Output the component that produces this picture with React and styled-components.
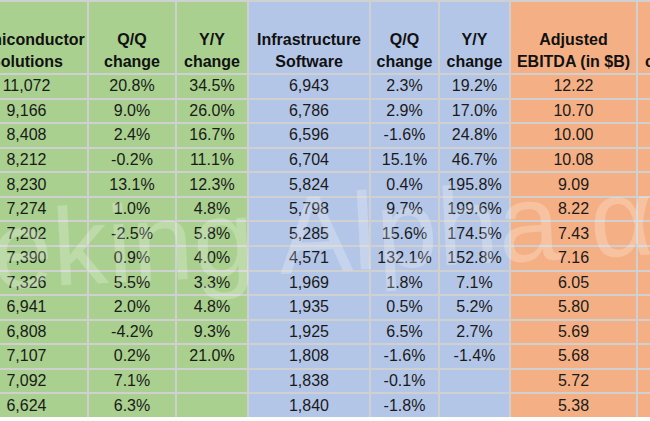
import React from 'react';
import styled, { createGlobalStyle } from 'styled-components';

const GlobalStyle = createGlobalStyle`
  html, body {
    margin: 0;
    padding: 0;
    background: #ffffff;
    overflow: hidden;
  }
  body {
    font-family: "Liberation Sans", Arial, sans-serif;
  }
`;

const tones = {
  green: '#a9d08e',
  blue: '#b4c6e7',
  orange: '#f4b084',
};

const Page = styled.div`
  position: relative;
  width: 650px;
  height: 421px;
  overflow: hidden;
`;

const Sheet = styled.div`
  display: grid;
  grid-template-columns: 121px 86px 70px 120px 67px 69px 125px 70px;
  grid-template-rows: 71px repeat(14, 22.57px);
  gap: 2px;
  padding-top: 2px;
  margin-left: -34px;
  width: max-content;
  background: #d0d0d0;
`;

const HeaderCell = styled.div`
  display: flex;
  align-items: flex-end;
  justify-content: center;
  padding: 0 2px 1px;
  background: ${(p) => tones[p.$tone]};
  color: #111111;
  font-size: 16px;
  font-weight: 700;
  line-height: 21.5px;
  text-align: center;
  white-space: nowrap;
`;

const Cell = styled.div`
  display: flex;
  align-items: center;
  justify-content: center;
  background: ${(p) => tones[p.$tone]};
  color: #1a1a1a;
  font-size: 16px;
  line-height: 18px;
  white-space: nowrap;
`;

const Watermark = styled.div`
  position: absolute;
  left: -140px;
  top: 198px;
  font-family: "Liberation Sans", Arial, sans-serif;
  font-size: 110px;
  line-height: 120px;
  color: rgba(255, 255, 255, 0.23);
  white-space: nowrap;
  transform: rotate(-3deg);
  transform-origin: left bottom;
  pointer-events: none;
`;

const columns = [
  { tone: 'green', title: ['Semiconductor', 'Solutions'] },
  { tone: 'green', title: ['Q/Q', 'change'] },
  { tone: 'green', title: ['Y/Y', 'change'] },
  { tone: 'blue', title: ['Infrastructure', 'Software'] },
  { tone: 'blue', title: ['Q/Q', 'change'] },
  { tone: 'blue', title: ['Y/Y', 'change'] },
  { tone: 'orange', title: ['Adjusted', 'EBITDA (in $B)'] },
  { tone: 'orange', title: ['Q/Q', 'change'] },
];

const rows = [
  ['11,072', '20.8%', '34.5%', '6,943', '2.3%', '19.2%', '12.22', ''],
  ['9,166', '9.0%', '26.0%', '6,786', '2.9%', '17.0%', '10.70', ''],
  ['8,408', '2.4%', '16.7%', '6,596', '-1.6%', '24.8%', '10.00', ''],
  ['8,212', '-0.2%', '11.1%', '6,704', '15.1%', '46.7%', '10.08', ''],
  ['8,230', '13.1%', '12.3%', '5,824', '0.4%', '195.8%', '9.09', ''],
  ['7,274', '1.0%', '4.8%', '5,798', '9.7%', '199.6%', '8.22', ''],
  ['7,202', '-2.5%', '5.8%', '5,285', '15.6%', '174.5%', '7.43', ''],
  ['7,390', '0.9%', '4.0%', '4,571', '132.1%', '152.8%', '7.16', ''],
  ['7,326', '5.5%', '3.3%', '1,969', '1.8%', '7.1%', '6.05', ''],
  ['6,941', '2.0%', '4.8%', '1,935', '0.5%', '5.2%', '5.80', ''],
  ['6,808', '-4.2%', '9.3%', '1,925', '6.5%', '2.7%', '5.69', ''],
  ['7,107', '0.2%', '21.0%', '1,808', '-1.6%', '-1.4%', '5.68', ''],
  ['7,092', '7.1%', '', '1,838', '-0.1%', '', '5.72', ''],
  ['6,624', '6.3%', '', '1,840', '-1.8%', '', '5.38', ''],
];

export default function App() {
  return (
    <Page>
      <GlobalStyle />
      <Sheet>
        {columns.map((col, i) => (
          <HeaderCell key={`h${i}`} $tone={col.tone}>
            <span>
              {col.title[0]}
              <br />
              {col.title[1]}
            </span>
          </HeaderCell>
        ))}
        {rows.map((row, r) =>
          row.map((value, c) => (
            <Cell key={`${r}-${c}`} $tone={columns[c].tone}>
              {value}
            </Cell>
          ))
        )}
      </Sheet>
      <Watermark>Seeking Alpha α</Watermark>
    </Page>
  );
}
